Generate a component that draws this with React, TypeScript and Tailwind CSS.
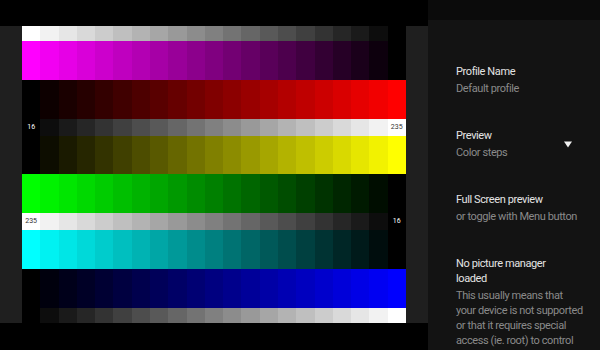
import React from "react"

type Strip = {
  rgb: [number, number, number]
  dir: "up" | "down"
  h: string
  left?: string
  right?: string
}

const STEPS = 21

const strips: Strip[] = [
  { rgb: [1, 1, 1], dir: "down", h: "h-[15px]" },
  { rgb: [1, 0, 1], dir: "down", h: "h-[39px]" },
  { rgb: [1, 0, 0], dir: "up", h: "h-[39px]" },
  { rgb: [1, 1, 1], dir: "up", h: "h-[17px]", left: "16", right: "235" },
  { rgb: [1, 1, 0], dir: "up", h: "h-[38px]" },
  { rgb: [0, 1, 0], dir: "down", h: "h-[39px]" },
  { rgb: [1, 1, 1], dir: "down", h: "h-[17px]", left: "235", right: "16" },
  { rgb: [0, 1, 1], dir: "down", h: "h-[39px]" },
  { rgb: [0, 0, 1], dir: "up", h: "h-[39px]" },
  { rgb: [1, 1, 1], dir: "up", h: "h-[15px]" },
]

const Label = ({ text }: { text: string }) => (
  <span className={`text-[7px] leading-none ${text === "16" ? "text-white" : "text-[#333]"}`}>{text}</span>
)

const ColorStrip = ({ strip }: { strip: Strip }) => {
  const cells = Array.from({ length: STEPS }, (_, i) => {
    const step = strip.dir === "up" ? i : STEPS - 1 - i
    const v = Math.round((255 * step) / (STEPS - 1))
    const [r, g, b] = strip.rgb
    return `rgb(${r * v},${g * v},${b * v})`
  })
  const last = cells.length - 1
  return (
    <div className={`flex shrink-0 ${strip.h}`}>
      {cells.map((c, i) => (
        <div key={i} className="flex-1 flex items-center justify-center" style={{ background: c }}>
          {i === 0 && strip.left && <Label text={strip.left} />}
          {i === last && strip.right && <Label text={strip.right} />}
        </div>
      ))}
    </div>
  )
}

const Title = ({ children }: { children: React.ReactNode }) => (
  <div className="text-[11px] leading-[15px] tracking-[-0.4px] whitespace-nowrap text-[#e4e4e4]">{children}</div>
)

const Sub = ({ children, className = "" }: { children: React.ReactNode; className?: string }) => (
  <div className={`text-[11px] leading-[15px] tracking-[-0.4px] whitespace-nowrap text-[#8a8a8a] ${className}`}>{children}</div>
)

const Setting = ({ title, sub, dropdown }: { title: string; sub: string; dropdown?: boolean }) => (
  <div className="flex items-center justify-between">
    <div className="flex flex-col">
      <Title>{title}</Title>
      <Sub className="mt-[2px]">{sub}</Sub>
    </div>
    {dropdown && (
      <svg width="8" height="7" viewBox="0 0 8 7">
        <path d="M0 0.5 H8 L4 6.5 Z" fill="#f0f0f0" />
      </svg>
    )}
  </div>
)

const description = [
  "This usually means that",
  "your device is not supported",
  "or that it requires special",
  "access (ie. root) to control",
  "display settings.",
]

export default function App() {
  return (
    <div
      className="flex w-[600px] h-[350px] overflow-hidden bg-black"
      style={{ fontFamily: 'Roboto, "DejaVu Sans Condensed", sans-serif' }}
    >
      <div className="flex flex-col w-[428px] shrink-0">
        <div className="h-[26px] shrink-0 bg-black" />
        <div className="flex h-[297px] shrink-0">
          <div className="w-[22px] bg-[#1f1f1f]" />
          <div className="flex flex-col w-[384px] bg-black">
            {strips.map((s, i) => (
              <ColorStrip key={i} strip={s} />
            ))}
          </div>
          <div className="w-[22px] bg-[#1f1f1f]" />
        </div>
        <div className="flex-1 bg-black" />
      </div>
      <div className="flex flex-col w-[172px] shrink-0 bg-[#131313]">
        <div className="h-[20px] shrink-0 bg-[#0b0b0b]" />
        <div className="flex flex-col gap-[32px] px-[28px] pt-[44px]">
          <Setting title="Profile Name" sub="Default profile" />
          <Setting title="Preview" sub="Color steps" dropdown />
          <Setting title="Full Screen preview" sub="or toggle with Menu button" />
          <div className="flex flex-col">
            <Title>No picture manager</Title>
            <Title>loaded</Title>
            <div className="mt-[2px]">
              {description.map((line) => (
                <Sub key={line}>{line}</Sub>
              ))}
            </div>
          </div>
        </div>
      </div>
    </div>
  )
}
